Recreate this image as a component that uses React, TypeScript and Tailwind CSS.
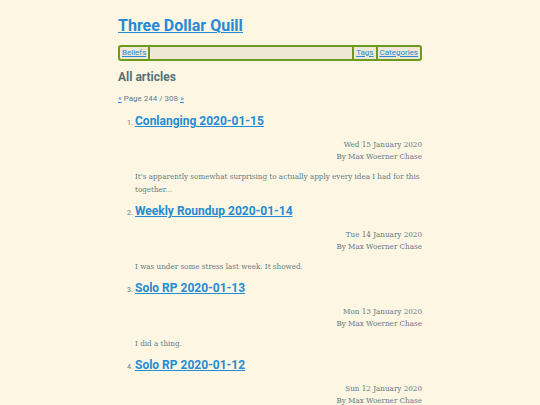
import React from 'react'

const ARTICLES = [
  {
    n: 1,
    title: 'Conlanging 2020-01-15',
    date: 'Wed 15 January 2020',
    summary: "It's apparently somewhat surprising to actually apply every idea I had for this together...",
  },
  {
    n: 2,
    title: 'Weekly Roundup 2020-01-14',
    date: 'Tue 14 January 2020',
    summary: 'I was under some stress last week. It showed.',
  },
  { n: 3, title: 'Solo RP 2020-01-13', date: 'Mon 13 January 2020', summary: 'I did a thing.' },
  { n: 4, title: 'Solo RP 2020-01-12', date: 'Sun 12 January 2020', summary: 'I did a thing.' },
]

const sans = "font-['Roboto','Noto_Sans',sans-serif]"
const serif = "font-['DejaVu_Serif','Liberation_Serif',serif] font-stretch-condensed"

const App = () => {
  return (
    <div className="min-h-[405px] bg-[#fdf6e3] text-[#657b83]">
      <div className="mx-auto w-[304px] pt-[15px]">
        <h1 className={`${sans} text-[16px] leading-[22px] font-bold text-[#268bd2] underline`}>
          <a href="#">Three Dollar Quill</a>
        </h1>

        <nav className={`${sans} mt-[8px] flex h-[16px] items-stretch rounded-[3px] border-2 border-[#6b9a1f] bg-[#eee8d5] text-[8px] leading-[12px]`}>
          <a href="#" className="border-r-2 border-[#6b9a1f] px-[2px] text-[#268bd2] underline">Beliefs</a>
          <div className="flex-1" />
          <a href="#" className="border-l-2 border-[#6b9a1f] px-[2px] text-[#268bd2] underline">Tags</a>
          <a href="#" className="border-l-2 border-[#6b9a1f] px-[2px] text-[#268bd2] underline">Categories</a>
        </nav>

        <h2 className={`${sans} mt-[8px] text-[12px] leading-[16px] font-bold text-[#586e75]`}>All articles</h2>

        <p className={`${sans} mt-[8px] text-[8px] leading-[12px]`}>
          <a href="#" className="text-[#268bd2] underline">«</a> Page 244 / 308{' '}
          <a href="#" className="text-[#268bd2] underline">»</a>
        </p>

        <ol className="mt-[5px]">
          {ARTICLES.map((a) => (
            <li key={a.n} className="pl-[17px]">
              <div className="flex items-baseline">
                <span className={`${sans} -ml-[8px] w-[8px] text-[7px]`}>{a.n}.</span>
                <a href="#" className={`${sans} text-[12px] leading-[22px] font-bold text-[#268bd2] underline`}>
                  {a.title}
                </a>
              </div>
              <div className={`${serif} mt-[7px] text-right text-[8px] leading-[12px]`}>
                <div>{a.date}</div>
                <div>By Max Woerner Chase</div>
              </div>
              <p className={`${serif} mt-[7px] mb-[4px] text-[8px] leading-[13px]`}>{a.summary}</p>
            </li>
          ))}
        </ol>
      </div>
    </div>
  )
}

export default App
